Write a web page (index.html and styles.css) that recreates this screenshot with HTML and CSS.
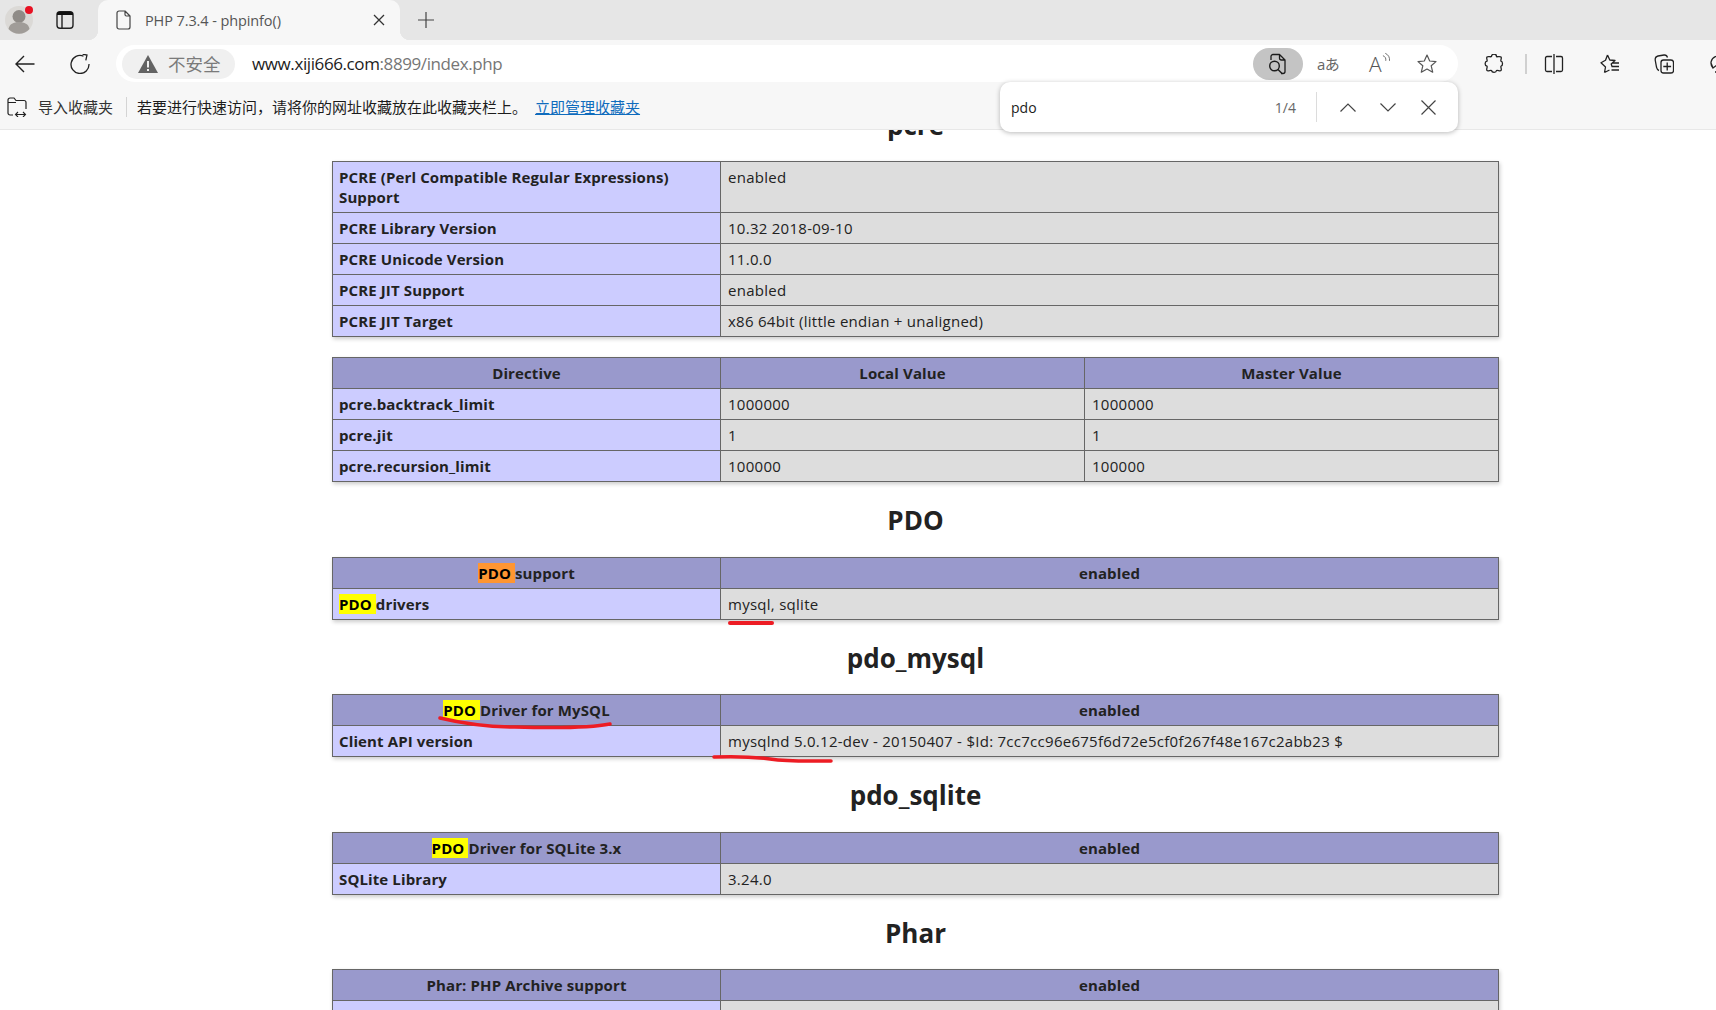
FILE: index.html
```html
<!DOCTYPE html>
<html lang="zh-CN">
<head>
<meta charset="utf-8">
<title>PHP 7.3.4 - phpinfo()</title>
<link rel="stylesheet" href="styles.css">
</head>
<body>
<header class="chrome">
  <div class="tabstrip">
    <div class="avatar">
      <svg width="32" height="32" viewBox="0 0 32 32"><circle cx="15" cy="16" r="14" fill="#dbd9d6"/><circle cx="15" cy="12.5" r="6.5" fill="#8f8b87"/><path d="M4.5 25c1-5 5-7 10.500-7s9.500 2 10.500 7a14 14 0 0 1-21 0z" fill="#a09c98"/><circle cx="25" cy="6" r="4" fill="#e81123"/></svg>
    </div>
    <svg class="ic tabs-ic" width="20" height="20" viewBox="0 0 20 20"><rect x="2" y="1.800" width="16" height="16.400" rx="3" fill="none" stroke="#222" stroke-width="1.400"/><path d="M2 5V4.500A2.700 2.700 0 0 1 4.700 1.800h10.600A2.700 2.700 0 0 1 18 4.500V5z" fill="#111"/><path d="M7 5v13" stroke="#222" stroke-width="1.400"/></svg>
    <div class="tab">
      <svg class="ic" width="20" height="20" viewBox="0 0 20 20"><path d="M4 3a2 2 0 0 1 2-2h6l5 5v11a2 2 0 0 1-2 2H6a2 2 0 0 1-2-2z M12 1v3.500a1.500 1.500 0 0 0 1.500 1.500H17" fill="none" stroke="#444" stroke-width="1.200" stroke-linejoin="round"/></svg>
      <span class="tab-title">PHP 7.3.4 - phpinfo()</span>
      <svg class="ic tab-x" width="12" height="12" viewBox="0 0 12 12"><path d="M1 1l10 10M11 1L1 11" stroke="#333" stroke-width="1.300"/></svg>
    </div>
    <svg class="ic plus" width="18" height="18" viewBox="0 0 18 18"><path d="M9 1v16M1 9h16" stroke="#444" stroke-width="1.200"/></svg>
  </div>

  <div class="toolbar">
    <svg class="ic" width="20" height="20" viewBox="0 0 20 20"><path d="M19.500 10H1M9 2l-8 8 8 8" fill="none" stroke="#222" stroke-width="1.400"/></svg>
    <svg class="ic refresh" width="20" height="20" viewBox="0 0 20 20"><path d="M13.500 2.200A9 9 0 1 0 19 10" fill="none" stroke="#222" stroke-width="1.300"/><path d="M12 .500h4.500V6" fill="none" stroke="#222" stroke-width="1.300" transform="rotate(12 14 3)"/></svg>
    <div class="omnibox">
      <div class="security">
        <svg width="20" height="18" viewBox="0 0 20 18"><path d="M10 0l10 18H0z" fill="#636363"/><path d="M9 6h2v6.500H9zM9 14h2v2H9z" fill="#f0f0f0"/></svg>
        <span class="security-text">不安全</span>
      </div>
      <div class="url">www.xiji666.com<span class="url-dim">:8899/index.php</span></div>
      <div class="omni-actions">
        <div class="reader">
          <svg width="20" height="22" viewBox="0 0 20 22"><path d="M3 7V3.500A2 2 0 0 1 5 1.500h6.500l5.500 5.500v11.500a2 2 0 0 1-2 2h-2M11.500 1.500V5a2 2 0 0 0 2 2H17" fill="none" stroke="#1c1c1c" stroke-width="1.300" stroke-linejoin="round"/><circle cx="6.500" cy="13" r="4.800" fill="none" stroke="#1c1c1c" stroke-width="1.400"/><path d="M10 16.500l4 4" stroke="#1c1c1c" stroke-width="1.500"/></svg>
        </div>
        <span class="translate">aあ</span>
        <span class="read-aloud">A<svg width="10" height="12" viewBox="0 0 10 12"><path d="M1 3.500A5 5 0 0 1 4 9M3.500 1A8 8 0 0 1 8 9" fill="none" stroke="#666" stroke-width="1"/></svg></span>
        <svg class="ic" width="20" height="20" viewBox="0 0 20 20"><path d="M10 1l2.700 6 6.300.6-4.800 4.200 1.500 6.400L10 15l-5.700 3.200 1.500-6.400L1 7.600 7.300 7z" fill="none" stroke="#555" stroke-width="1.200" stroke-linejoin="round"/></svg>
      </div>
    </div>
    <div class="tools">
      <svg class="ic" width="20" height="20" viewBox="0 0 20 20"><path d="M7.500 2.500a2.500 2.500 0 0 1 5 0c0 .8 3.500-.5 4.500.5s-.7 3.500 0 4.200c2 .3 2 4.600 0 5-.7.500 1 3.300 0 4.300s-3.500-.8-4.500 0c-.3 2.500-4.500 2.500-5 0-.8-.8-3.500 1-4.500 0s.7-3.300 0-4.300c-2.500-.5-2.500-4.500 0-5 .7-.7-1-3.200 0-4.200s3.700.3 4.500-.5z" fill="none" stroke="#222" stroke-width="1.300" stroke-linejoin="round"/></svg>
      <span class="tool-sep"></span>
      <svg class="ic" width="20" height="20" viewBox="0 0 20 20"><path d="M8 2.500H3A1.500 1.500 0 0 0 1.500 4v12A1.500 1.500 0 0 0 3 17.500h5M12 2.500h5A1.500 1.500 0 0 1 18.500 4v12a1.500 1.500 0 0 1-1.500 1.500h-5M10 0v20" fill="none" stroke="#222" stroke-width="1.300"/></svg>
      <svg class="ic" width="20" height="20" viewBox="0 0 20 20"><path d="M8.500 1l2.300 5 5.200.5-3.800 3.500 1 3M5.500 18.500l1-5.500L2 8.800 6.500 6.300 8.500 1M5.500 18.500l5-2.500M13 9h7M13 12.500h7M12.500 16h7.500" fill="none" stroke="#222" stroke-width="1.300" stroke-linejoin="round"/></svg>
      <svg class="ic" width="20" height="20" viewBox="0 0 20 20"><path d="M5 16.500C3 16 3 15 2.500 13L1.200 6C1 3.500 2 2.500 4 2l6-1c2-.2 3 .6 3.500 2.500" fill="none" stroke="#222" stroke-width="1.300"/><rect x="7" y="6" width="12.500" height="13" rx="2.500" fill="none" stroke="#222" stroke-width="1.300"/><path d="M13.200 8.500v8M9.300 12.500h7.800" stroke="#222" stroke-width="1.300"/></svg>
      <svg class="ic" width="20" height="20" viewBox="0 0 20 20"><path d="M4 14A7 7 0 1 1 16 9M13 18H6M2 9l2 5 4-3" fill="none" stroke="#222" stroke-width="1.300"/></svg>
    </div>
  </div>

  <div class="favbar">
    <svg class="ic" width="20" height="20" viewBox="0 0 20 20"><path d="M6 18H3a2 2 0 0 1-2-2V3a2 2 0 0 1 2-2h4l2 2.500h8a2 2 0 0 1 2 2V12M1 5.500h8" fill="none" stroke="#222" stroke-width="1.200"/><path d="M8.500 17.500h10M11 15l-2.500 2.500L11 20M16 15l2.500 2.500L16 20" fill="none" stroke="#222" stroke-width="1.100"/></svg>
    <span class="fav-import">导入收藏夹</span>
    <span class="fav-sep"></span>
    <span class="fav-hint">若要进行快速访问，请将你的网址收藏放在此收藏夹栏上。</span>
    <a class="fav-link" href="#">立即管理收藏夹</a>
  </div>

  <div class="findbar">
    <span class="find-q">pdo</span>
    <span class="find-count">1/4</span>
    <span class="find-sep"></span>
    <svg class="ic find-up" width="16" height="9" viewBox="0 0 16 9"><path d="M.5 8.500L8 1l7.500 7.500" fill="none" stroke="#444" stroke-width="1.200"/></svg>
    <svg class="ic find-down" width="16" height="9" viewBox="0 0 16 9"><path d="M.5.500L8 8l7.500-7.500" fill="none" stroke="#444" stroke-width="1.200"/></svg>
    <svg class="ic find-x" width="15" height="15" viewBox="0 0 15 15"><path d="M.5.500l14 14M14.500.500l-14 14" stroke="#444" stroke-width="1.200"/></svg>
  </div>
</header>

<main class="page">
  <div class="sheet">
    <h2>pcre</h2>
    <table class="cols2">
      <colgroup><col class="c1"><col></colgroup>
      <tr><td class="e">PCRE (Perl Compatible Regular Expressions) Support</td><td class="v">enabled</td></tr>
      <tr><td class="e">PCRE Library Version</td><td class="v">10.32 2018-09-10</td></tr>
      <tr><td class="e">PCRE Unicode Version</td><td class="v">11.0.0</td></tr>
      <tr><td class="e">PCRE JIT Support</td><td class="v">enabled</td></tr>
      <tr><td class="e">PCRE JIT Target</td><td class="v">x86 64bit (little endian + unaligned)</td></tr>
    </table>
    <table class="cols3">
      <colgroup><col class="c1"><col class="c2"><col></colgroup>
      <tr class="h"><th>Directive</th><th>Local Value</th><th>Master Value</th></tr>
      <tr><td class="e">pcre.backtrack_limit</td><td class="v">1000000</td><td class="v">1000000</td></tr>
      <tr><td class="e">pcre.jit</td><td class="v">1</td><td class="v">1</td></tr>
      <tr><td class="e">pcre.recursion_limit</td><td class="v">100000</td><td class="v">100000</td></tr>
    </table>
    <h2>PDO</h2>
    <table class="cols2">
      <colgroup><col class="c1"><col></colgroup>
      <tr class="h"><th><mark class="active">PDO </mark>support</th><th>enabled</th></tr>
      <tr><td class="e"><mark>PDO </mark>drivers</td><td class="v">mysql, sqlite</td></tr>
    </table>
    <h2>pdo_mysql</h2>
    <table class="cols2">
      <colgroup><col class="c1"><col></colgroup>
      <tr class="h"><th><mark>PDO </mark>Driver for MySQL</th><th>enabled</th></tr>
      <tr><td class="e">Client API version</td><td class="v">mysqlnd 5.0.12-dev - 20150407 - $Id: 7cc7cc96e675f6d72e5cf0f267f48e167c2abb23 $</td></tr>
    </table>
    <h2>pdo_sqlite</h2>
    <table class="cols2">
      <colgroup><col class="c1"><col></colgroup>
      <tr class="h"><th><mark>PDO </mark>Driver for SQLite 3.x</th><th>enabled</th></tr>
      <tr><td class="e">SQLite Library</td><td class="v">3.24.0</td></tr>
    </table>
    <h2>Phar</h2>
    <table class="cols2">
      <colgroup><col class="c1"><col></colgroup>
      <tr class="h"><th>Phar: PHP Archive support</th><th>enabled</th></tr>
      <tr><td class="e">&nbsp;</td><td class="v">&nbsp;</td></tr>
    </table>
  </div>
</main>

<svg class="marks" width="1716" height="1010" viewBox="0 0 1716 1010">
  <g fill="none" stroke="#ed1c24" stroke-linecap="round">
    <path d="M730 623H772" stroke-width="4"/>
    <path d="M440 718C465 724 490 727 515 727C550 728 590 728 610 724" stroke-width="3.500"/>
    <path d="M714 757C740 756 755 757 770 759C790 762 810 761 831 761" stroke-width="3.500"/>
  </g>
</svg>
</body>
</html>
```

FILE: styles.css
```css
html, body {
  margin: 0;
  height: 1010px;
  overflow: hidden;
  background: #fff;
}
body {
  position: relative;
  font-family: "Open Sans", "Noto Sans CJK SC", sans-serif;
}
.ic { display: block; flex: none; }

/* browser chrome */
.chrome { position: relative; z-index: 2; background: #f7f7f7; }
.tabstrip {
  display: flex;
  align-items: center;
  height: 40px;
  background: #e6e6e6;
}
.avatar { width: 32px; height: 32px; margin-left: 4px; flex: none; }
.tabs-ic { margin-left: 19px; }
.tab {
  position: relative;
  display: flex;
  align-items: center;
  width: 302px;
  height: 40px;
  box-sizing: border-box;
  margin-left: 23px;
  padding: 0 15px;
  background: #f7f7f7;
  border-radius: 10px 10px 0 0;
  flex: none;
}
.tab::before, .tab::after {
  content: "";
  position: absolute;
  bottom: 0;
  width: 10px;
  height: 10px;
}
.tab::before { left: -10px; background: radial-gradient(circle at 0 0, #e6e6e6 10px, #f7f7f7 10.500px); }
.tab::after { right: -10px; background: radial-gradient(circle at 100% 0, #e6e6e6 10px, #f7f7f7 10.500px); }
.tab-title {
  margin-left: 12px;
  font-size: 14.500px;
  letter-spacing: -0.1px;
  color: #555;
  white-space: nowrap;
}
.tab-x { margin-left: auto; margin-right: 0; }
.plus { margin-left: 17px; }

.toolbar {
  display: flex;
  align-items: center;
  height: 50px;
  padding-left: 15px;
  padding-bottom: 3px;
  box-sizing: border-box;
  width: 1760px;
}
.refresh { margin-left: 35px; }
.omnibox {
  display: flex;
  align-items: center;
  width: 1342px;
  height: 37px;
  box-sizing: border-box;
  margin-left: 26px;
  padding: 0 21px 0 6px;
  background: #fff;
  border-radius: 19px;
  flex: none;
}
.security {
  display: flex;
  align-items: center;
  width: 113px;
  height: 30px;
  box-sizing: border-box;
  padding-left: 16px;
  background: #f0f0f0;
  border-radius: 15px;
  flex: none;
}
.security-text {
  margin-left: 10px;
  font-size: 17.500px;
  color: #7a7a7a;
  white-space: nowrap;
}
.url {
  margin-left: 17px;
  font-size: 17px;
  letter-spacing: -0.4px;
  color: #1c1c1c;
  white-space: nowrap;
}
.url-dim { color: #767676; }
.omni-actions {
  display: flex;
  align-items: center;
  margin-left: auto;
}
.reader {
  display: flex;
  align-items: center;
  justify-content: center;
  width: 50px;
  height: 32px;
  background: #c4c4c4;
  border-radius: 16px;
}
.translate {
  margin-left: 14px;
  width: 26px;
  font-size: 15px;
  letter-spacing: -0.5px;
  color: #666;
  white-space: nowrap;
}
.read-aloud {
  display: flex;
  align-items: flex-start;
  margin-left: 26px;
  width: 22px;
  font-size: 21px;
  line-height: 24px;
  font-weight: 300;
  color: #555;
}
.omni-actions > .ic { margin-left: 26px; }
.tools {
  display: flex;
  align-items: center;
  margin-left: 26px;
  gap: 35px;
}
.tool-sep {
  width: 2px;
  height: 20px;
  margin: 0 -18px 0 -14px;
  background: #d0d0d0;
}

.favbar {
  display: flex;
  align-items: center;
  height: 40px;
  box-sizing: border-box;
  padding-left: 7px;
  padding-bottom: 6px;
  border-bottom: 1px solid #e8e8e8;
  font-size: 15px;
  color: #1c1c1c;
  white-space: nowrap;
}
.fav-import { margin-left: 11px; color: #333; }
.fav-sep {
  width: 1px;
  height: 20px;
  margin: 0 10px 0 13px;
  background: #d4d4d4;
}
.fav-link {
  margin-left: 8px;
  color: #0f6cbd;
  text-decoration: underline;
}

.findbar {
  position: absolute;
  left: 1000px;
  top: 82px;
  display: flex;
  align-items: center;
  width: 458px;
  height: 50px;
  box-sizing: border-box;
  padding: 0 22px 0 11px;
  background: #fff;
  border-radius: 10px;
  box-shadow: 0 1px 5px rgba(0, 0, 0, .28);
}
.find-q { font-size: 14px; color: #1c1c1c; }
.find-count { margin-inline-start: auto; font-size: 14px; color: #666; }
.find-sep {
  width: 1px;
  height: 30px;
  margin: 0 23px 0 20px;
  background: #dcdcdc;
}
.find-down { margin-left: 24px; }
.find-x { margin-left: 25px; }

/* page */
.page {
  height: 880px;
  overflow: hidden;
  color: #222;
}
.sheet {
  width: 1167px;
  margin: -24px 0 0 332px;
  padding-top: 0.5px;
}
h2 {
  margin: 0 0 19px;
  padding-top: 2px;
  font-size: 26px;
  line-height: 33.500px;
  font-weight: 700;
  text-align: center;
}
table {
  width: 1167px;
  table-layout: fixed;
  border-collapse: collapse;
  margin-bottom: 20px;
  box-shadow: 1px 2px 4px #ccc;
  font-size: 15px;
  line-height: 20px;
  letter-spacing: 0.27px;
}
.c1 { width: 388px; }
.c2 { width: 364px; }
td, th {
  padding: 5px 6px;
  border: 1px solid #666;
  vertical-align: baseline;
}
td.v { padding-left: 7px; }
th { font-weight: 700; text-align: center; letter-spacing: 0.12px; }
.h { background: #99c; }
.e { background: #ccf; font-weight: 700; letter-spacing: 0.12px; }
.v { background: #ddd; }
mark { background: #ff0; color: #000; }
mark.active { background: #ff9632; }

/* hand-drawn annotation above the page */
.marks {
  position: absolute;
  left: 0;
  top: 0;
  z-index: 3;
  pointer-events: none;
}
```
